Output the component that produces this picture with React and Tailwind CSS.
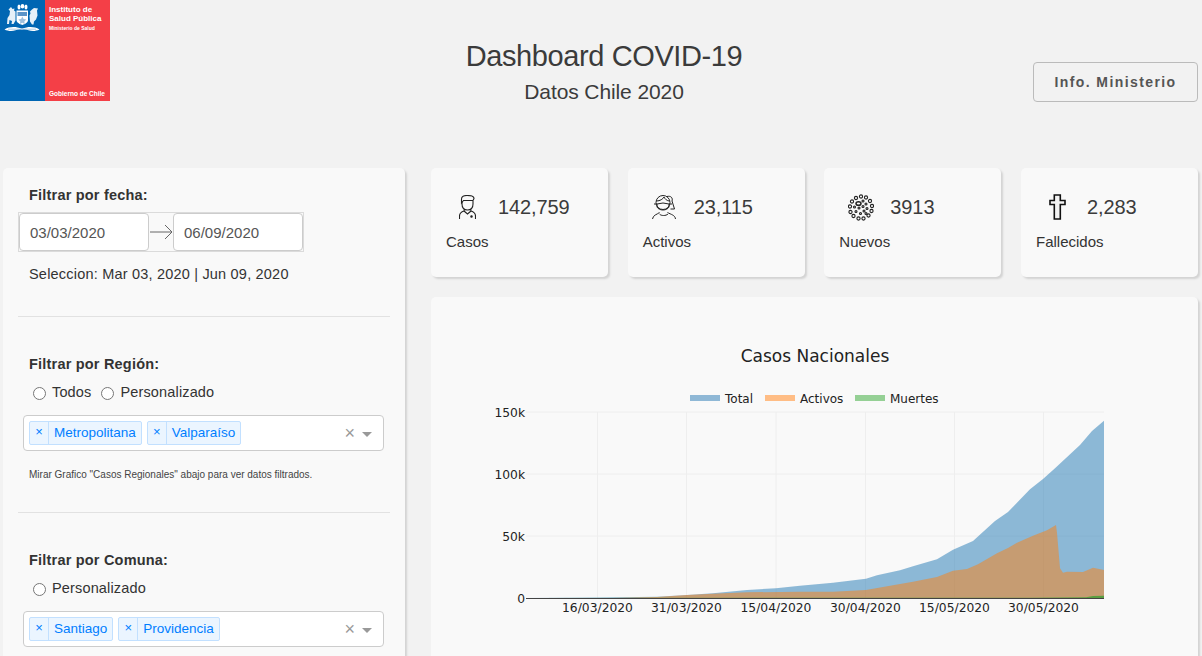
import React from "react";

const totalPts = "526,598 600,597.5 657,596.7 687,595 713,593.3 747,590 776,588.3 800,585.7 833,582.7 866,578.7 877,575.3 900,570.3 913,566.3 937,559.3 953,549.7 973,541 995,521 1008,512 1030,489.3 1043,479 1055,468.3 1080,445 1092,431 1104,420.7 1104,598";
const activePts = "526,598 613,598 657,597 687,595 713,593.7 747,592.3 800,591.7 833,591.7 866,590 883,587 913,581.7 937,577 953,570.7 967,569 978,564.3 997,553.3 1008,548 1017,542.7 1033,535.7 1047,530.3 1056,525 1057,533 1060,568.3 1063,572.7 1067,571.7 1083,572 1093,567.7 1104,570 1104,598";
const deathPts = "526,598 1030,597.7 1086,597.3 1093,596 1104,595.7 1104,598";

const xTicks = [
  { x: 597.5, label: "16/03/2020" },
  { x: 686.5, label: "31/03/2020" },
  { x: 776, label: "15/04/2020" },
  { x: 865.5, label: "30/04/2020" },
  { x: 954.5, label: "15/05/2020" },
  { x: 1043.5, label: "30/05/2020" },
];
const yTicks = [
  { y: 412, label: "150k" },
  { y: 474, label: "100k" },
  { y: 536, label: "50k" },
  { y: 598, label: "0" },
];

const PersonIcon = () => (
  <svg width="17" height="24" viewBox="0 0 17 24" fill="none" stroke="#222" strokeWidth="1.1">
    <path d="M2.500 8V4C2.500 1.500 5 .5 8 .5c4 0 7 1 7 3l-1 2H4.500L2.500 8z" />
    <path d="M3 7v2c0 4 2.500 6 5.500 6s5.500-2 5.500-6V6" />
    <path d="M5.500 14L5 16c-3 1-4.500 2.500-4.500 5v3M11.500 14l.5 2c3 1 4.500 2.500 4.500 5v3M5 16l3.500 3 3.500-3" />
    <circle cx="12.500" cy="21.500" r=".7" fill="#222" />
  </svg>
);

const WomanIcon = () => (
  <svg width="24" height="24" viewBox="0 0 24 24" fill="none" stroke="#222" strokeWidth="1">
    <circle cx="11" cy="7.500" r="7" />
    <path d="M4.500 6C8 6 11 4 12 2c1 2 3 4 5.500 4" />
    <path d="M5 9l6-1 6 1v3c-2 4-10 4-12 0z" />
    <path d="M2 9h3M17 9h3" />
    <path d="M15 1.500c4-1 6 1.500 5 4.500l2.500 8h-4" />
    <path d="M.5 24c.5-4 4.500-4.500 7-6.500M23.500 24c-.5-4-4.500-4.500-8-6.500M7.500 19c1.500 2 6.500 2 8.500 0" />
  </svg>
);

const VirusIcon = () => (
  <svg width="26" height="27" viewBox="0 0 26 27" fill="none" stroke="#222" strokeWidth="1.100">
    {[[13, 2.500], [18, 3.500], [22, 7], [24, 12], [23.500, 17], [20.500, 21.500], [15.500, 24.500], [10.500, 24.500], [5.500, 22], [2.500, 18], [2, 12.500], [4, 7.500], [8, 4]].map(([cx, cy]) => (
      <circle key={cx + "-" + cy} cx={cx} cy={cy} r="1.600" />
    ))}
    <ellipse cx="10.500" cy="9.500" rx="2.500" ry="1.800" strokeWidth="1.500" />
    {[[15, 7], [18, 10], [6.500, 13], [11, 14], [15, 12.500], [19, 14.500], [16, 17], [8, 17.500], [12.500, 19.500], [18, 19.500]].map(([cx, cy]) => (
      <circle key={cx + "-" + cy} cx={cx} cy={cy} r="1" />
    ))}
  </svg>
);

const CrossIcon = () => (
  <svg width="17" height="26" viewBox="0 0 17 26" fill="#f4f4f4" stroke="#111" strokeWidth="1.600">
    <path d="M5.300 1h6v5.500H16v4h-4.700V25h-6V10.500H1v-4h4.300z" />
  </svg>
);

// escudo del logo, dibujado a grandes rasgos
const Emblem = () => (
  <svg width="36" height="28" viewBox="0 0 36 28" fill="#fff">
    <ellipse cx="15" cy="3" rx="1.500" ry="2.500" />
    <ellipse cx="18.500" cy="2.200" rx="1.800" ry="2.200" />
    <ellipse cx="22" cy="3" rx="1.500" ry="2.500" />
    <path d="M12.500 6.500h11.500v9.500c0 2.500-3 4-5.700 5-2.800-1-5.800-2.500-5.800-5z" />
    <path d="M13.500 8h9.500v4h-9.500z" fill="#5b94c8" />
    <path d="M18.300 12.500l1.300 2.600 2.700.4-2 1.900.5 2.600-2.500-1.300-2.400 1.300.4-2.600-1.900-1.900 2.700-.4z" fill="#9fc0dd" />
    {/* huemul */}
    <path d="M7 3l1.500 2 2-.5-.5 2 1.500 1v9l-2 3.500h-2l.5-3-2.500-1-.5 4h-2l.5-6 2-3 .5-4-1.500-1.500z" opacity=".9" />
    {/* condor */}
    <path d="M30 4l-2 1.500-2 2 .5 2-1 2 .5 6 2 3h1.500l.5-3 2-2 1.500-4-.5-5 1-2z" opacity=".9" />
    <path d="M.5 25.500c4-2.500 9-2.800 13-2l4.500 1 4.500-1c4-.8 9-.5 13 2-3.500 1.800-8 1.800-11 .8-2.200-.7-4-1-6.500-.5-2.500-.5-4.300-.2-6.500.5-3 1-7.500 1-11-.8z" />
    <path d="M4 25.200h28" stroke="#5b94c8" strokeWidth=".5" />
  </svg>
);

const Logo = () => (
  <div className="flex h-[101px] w-[110px] shrink-0 font-['Liberation_Sans',sans-serif] text-white">
    <div className="w-[45px] bg-[#0066b3] pt-[4px] pl-[4px]">
      <Emblem />
    </div>
    <div className="flex w-[65px] flex-col bg-[#f43f47] pt-[6px] pl-[4px]">
      <p className="text-[8px] leading-[8.500px] font-bold">Instituto de<br />Salud Pública</p>
      <p className="mt-[2px] text-[5px] leading-[6px] font-bold">Ministerio de Salud</p>
      <p className="mt-auto mb-[3px] text-[6.500px] leading-[9px] font-bold">Gobierno de Chile</p>
    </div>
  </div>
);

const Tag = ({ label }) => (
  <span className="flex h-[24px] items-stretch rounded-[2px] border border-[#c2e0ff] bg-[#ebf5ff] text-[13.500px] text-[#007eff]">
    <span className="flex w-[19px] items-center justify-center border-r border-[#c2e0ff] pb-[3px] text-[13px]">×</span>
    <span className="flex items-center px-[5px]">{label}</span>
  </span>
);

const MultiSelect = ({ tags }) => (
  <div className="ml-[5px] flex h-[36px] w-[361px] items-center rounded-[4px] border border-[#ccc] bg-white pr-[11px] pl-[5px]">
    <div className="flex flex-1 gap-[5px]">
      {tags.map((t) => (
        <Tag key={t} label={t} />
      ))}
    </div>
    <span className="mr-[7px] text-[18px] leading-none text-[#999]">×</span>
    <span className="mt-[2px] h-0 w-0 border-x-[5px] border-t-[5px] border-x-transparent border-t-[#999]" />
  </div>
);

const Radio = ({ label }) => (
  <label className="flex items-center gap-[6px]">
    <input type="radio" name={label} className="m-0 h-[13px] w-[13px]" />
    <span className="tracking-[0.150px]">{label}</span>
  </label>
);

const Filter = ({ children }) => (
  <p className="ml-[11px] text-[14.500px] leading-[20px] font-bold tracking-[0.200px] text-[#333]">{children}</p>
);

const StatCard = ({ icon, value, label, iconBox }) => (
  <div className="h-[109px] w-[177px] rounded-[5px] bg-[#f9f9f9] pt-[24px] pl-[15px] shadow-[2px_2px_2px_lightgrey]">
    <div className="flex h-[30px] items-center">
      <div className={`flex justify-center ${iconBox}`}>{icon}</div>
      <span className="text-[20px] tracking-[-0.100px] text-[#3b3b3b]">{value}</span>
    </div>
    <p className="mt-[10px] text-[15px] leading-[20px] text-[#333]">{label}</p>
  </div>
);

const Chart = () => (
  <svg width="767" height="360" viewBox="431 297 767 360" className="block" fontFamily="'DejaVu Sans', sans-serif">
    <text x="815" y="362" textAnchor="middle" fontSize="17" fill="#222">Casos Nacionales</text>

    <rect x="690" y="395" width="30" height="6" fill="#8fb8d6" />
    <text x="725" y="402.500" fontSize="12" fill="#222">Total</text>
    <rect x="765" y="395" width="30" height="6" fill="#ffbd85" />
    <text x="800" y="402.500" fontSize="12" fill="#222">Activos</text>
    <rect x="855" y="395" width="30" height="6" fill="#95d095" />
    <text x="890" y="402.500" fontSize="12" fill="#222">Muertes</text>

    {yTicks.slice(0, 3).map((t) => (
      <line key={t.label} x1="526" x2="1104" y1={t.y} y2={t.y} stroke="#eee" strokeWidth="1" />
    ))}
    {xTicks.map((t) => (
      <line key={t.x} x1={t.x} x2={t.x} y1="412" y2="598" stroke="#eee" strokeWidth="1" />
    ))}

    <polygon points={totalPts} fill="#1f77b4" fillOpacity=".5" />
    <polygon points={activePts} fill="#ff7f0e" fillOpacity=".5" />
    <polygon points={deathPts} fill="#2ca02c" fillOpacity=".7" />
    <line x1="526" x2="1104" y1="598.500" y2="598.500" stroke="#444" strokeWidth="1" />

    {yTicks.map((t) => (
      <text key={t.label} x="525" y={t.y + 5} textAnchor="end" fontSize="12.300" fill="#222">{t.label}</text>
    ))}
    {xTicks.map((t) => (
      <text key={t.label} x={t.x} y="612" textAnchor="middle" fontSize="12.300" fill="#222">{t.label}</text>
    ))}
  </svg>
);

export default function App() {
  return (
    <div className="h-[656px] overflow-hidden bg-[#f2f2f2] font-['Liberation_Sans',Arial,sans-serif] text-[#333]">
      {/* header */}
      <div className="flex h-[168px] items-start">
        <div className="w-[405px]">
          <Logo />
        </div>
        <div className="w-[398px] pt-[38px] text-center">
          <h1 className="text-[29px] leading-[36px] tracking-[-0.400px] text-[#3b3b3b]">Dashboard COVID-19</h1>
          <h2 className="mt-[6px] text-[21px] leading-[24px] tracking-[-0.100px] text-[#3b3b3b]">Datos Chile 2020</h2>
        </div>
        <div className="flex flex-1 justify-end pt-[62px] pr-[4px]">
          <button className="h-[40px] w-[165px] rounded-[4px] border border-[#bbb] text-[14px] font-bold tracking-[1.400px] text-[#555]">
            Info. Ministerio
          </button>
        </div>
      </div>

      <div className="flex gap-[26px] pl-[3px]">
        {/* filtros */}
        <div className="h-[560px] w-[402px] shrink-0 rounded-[5px] bg-[#f9f9f9] px-[15px] pt-[17px] text-[14.500px] shadow-[2px_2px_2px_lightgrey]">
          <Filter>Filtrar por fecha:</Filter>
          <div className="mt-[7px] flex h-[40px] w-[286px] items-center border border-[#dbdbdb] text-[15px] text-[#555]">
            <div className="flex h-[38px] w-[130px] items-center rounded-[4px] border border-[#ccc] bg-white pt-[2px] pl-[10px]">03/03/2020</div>
            <svg width="24" height="16" viewBox="0 0 24 16" fill="none" stroke="#666" strokeWidth="1">
              <path d="M1 8h22M16 1l7 7-7 7" />
            </svg>
            <div className="flex h-[38px] w-[130px] items-center rounded-[4px] border border-[#ccc] bg-white pt-[2px] pl-[10px]">06/09/2020</div>
          </div>
          <p className="mt-[12px] ml-[11px] leading-[20px] tracking-[0.200px]">Seleccion: Mar 03, 2020 | Jun 09, 2020</p>
          <hr className="mt-[32px] border-[#e2e2e2]" />

          <div className="mt-[37px]">
            <Filter>Filtrar por Región:</Filter>
          </div>
          <div className="mt-[9px] ml-[15px] flex h-[20px] gap-[10px]">
            <Radio label="Todos" />
            <Radio label="Personalizado" />
          </div>
          <div className="mt-[12px]">
            <MultiSelect tags={["Metropolitana", "Valparaíso"]} />
          </div>
          <p className="mt-[18px] ml-[11px] text-[10px] leading-[12px] text-[#444]">Mirar Grafico "Casos Regionales" abajo para ver datos filtrados.</p>
          <hr className="mt-[31px] border-[#e2e2e2]" />

          <div className="mt-[37px]">
            <Filter>Filtrar por Comuna:</Filter>
          </div>
          <div className="mt-[9px] ml-[15px] flex h-[20px]">
            <Radio label="Personalizado" />
          </div>
          <div className="mt-[12px]">
            <MultiSelect tags={["Santiago", "Providencia"]} />
          </div>
        </div>

        {/* tarjetas y grafico */}
        <div className="w-[767px] shrink-0">
          <div className="flex justify-between">
            <StatCard icon={<PersonIcon />} iconBox="w-[52px] pr-[10px]" value="142,759" label="Casos" />
            <StatCard icon={<WomanIcon />} iconBox="w-[51px] pr-[8px]" value="23,115" label="Activos" />
            <StatCard icon={<VirusIcon />} iconBox="w-[51px] pr-[8px]" value="3913" label="Nuevos" />
            <StatCard icon={<CrossIcon />} iconBox="w-[51px] pr-[8px]" value="2,283" label="Fallecidos" />
          </div>
          <div className="mt-[20px] h-[400px] rounded-[5px] bg-[#f9f9f9] shadow-[2px_2px_2px_lightgrey]">
            <Chart />
          </div>
        </div>
      </div>
    </div>
  );
}
